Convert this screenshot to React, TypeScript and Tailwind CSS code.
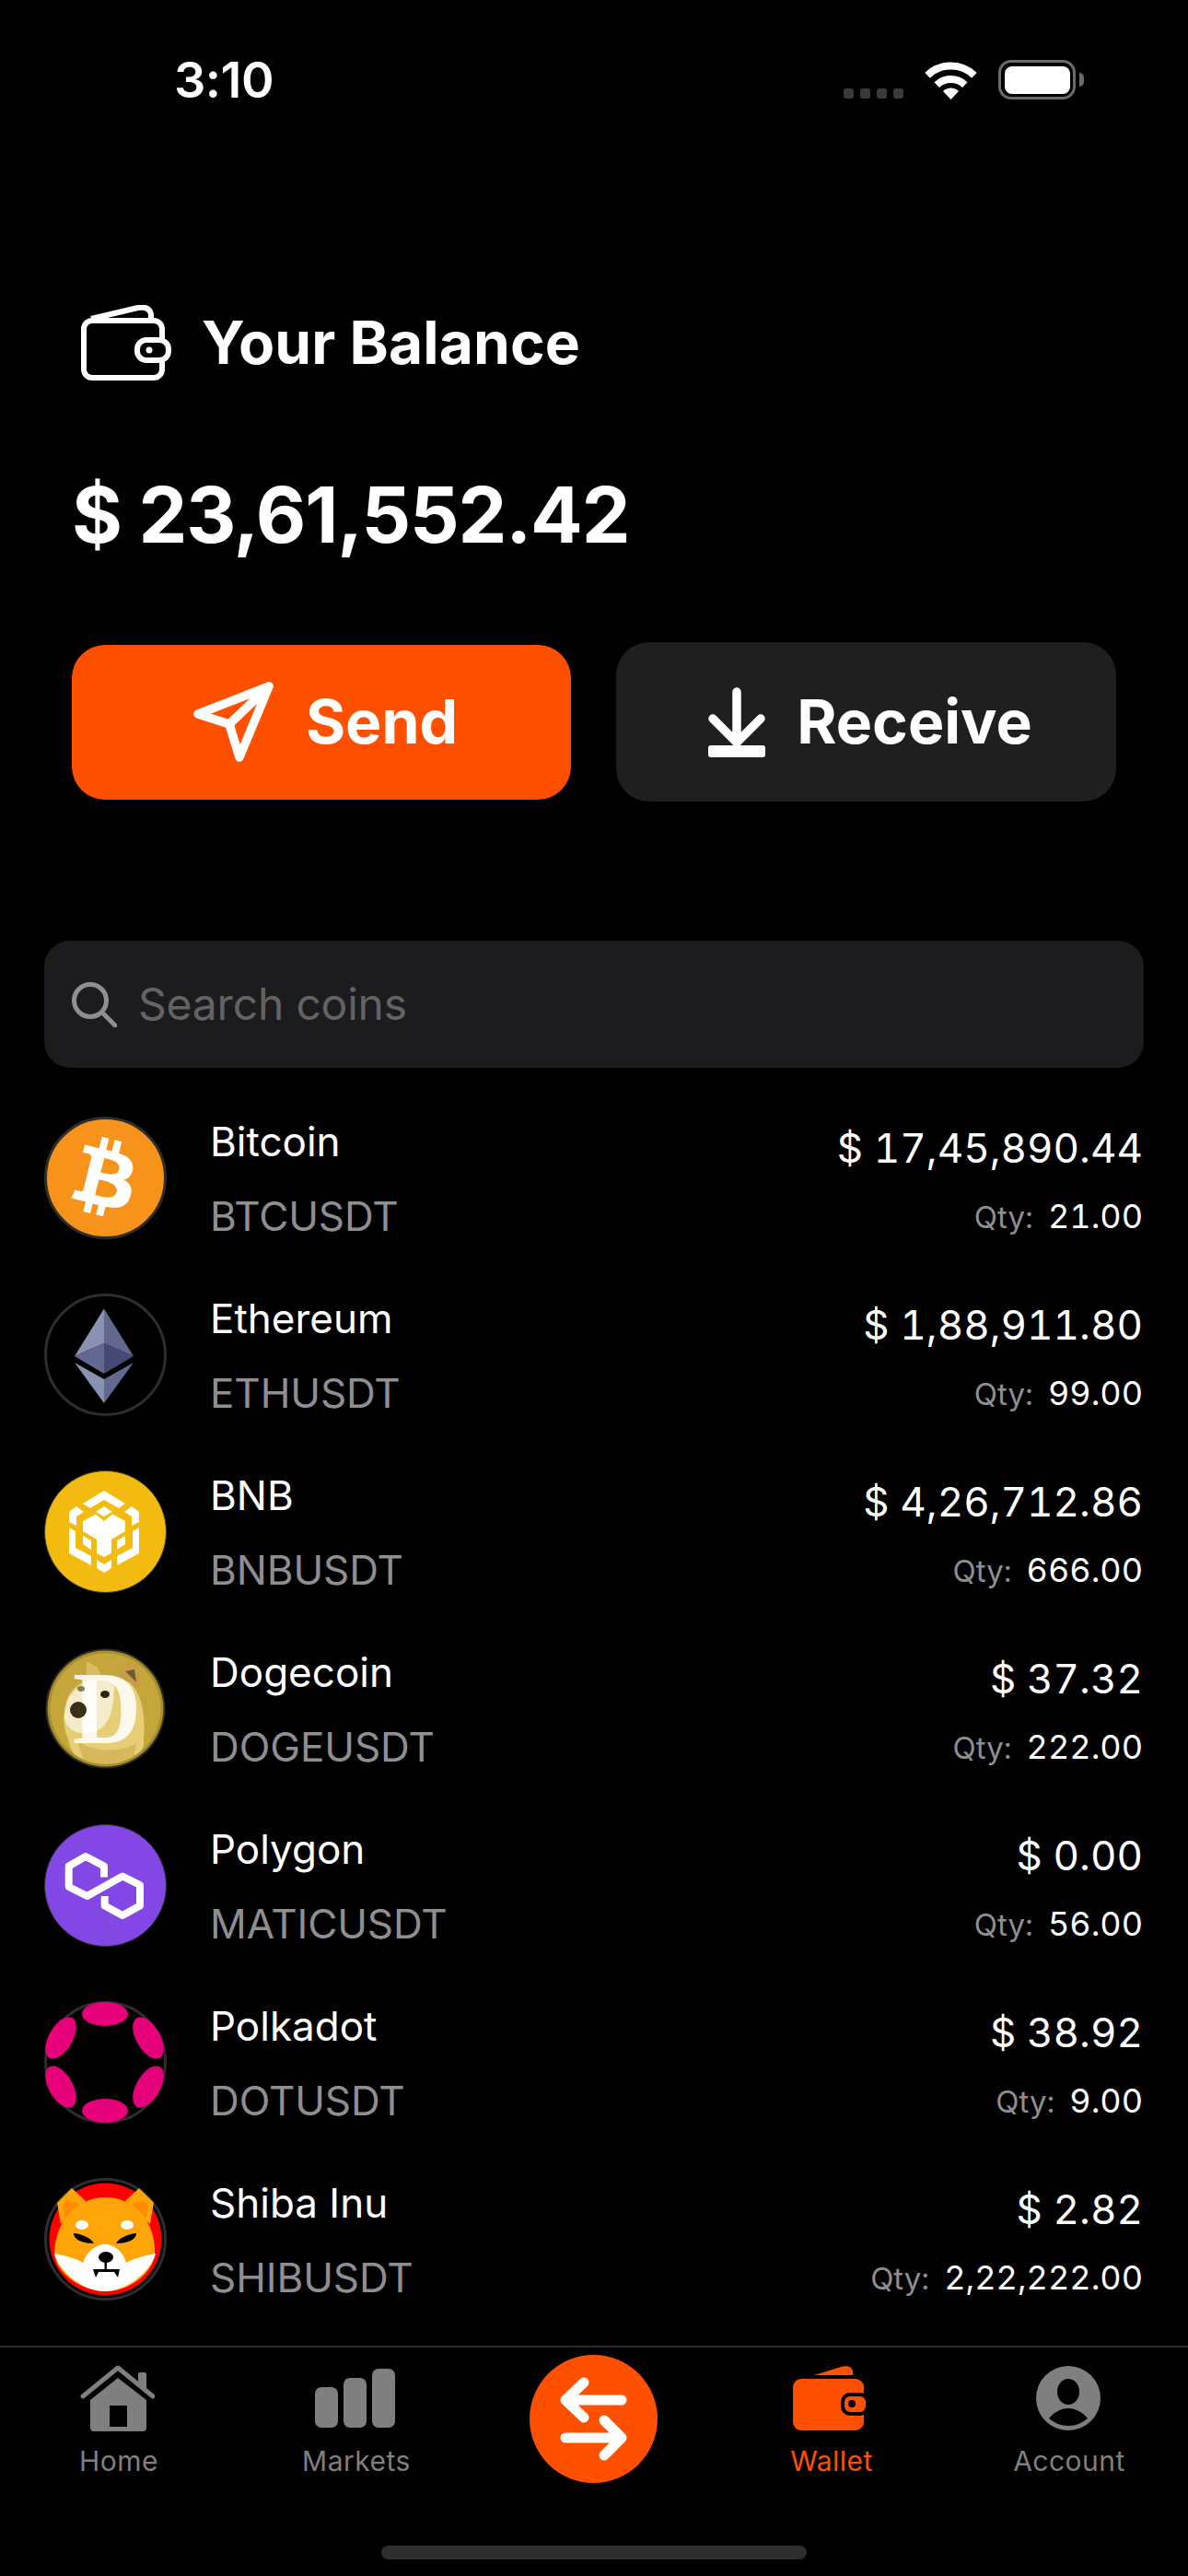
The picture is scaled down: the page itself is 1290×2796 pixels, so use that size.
import { FaBtc } from "react-icons/fa";
import type { ReactNode } from "react";

const coins = [
  { name: "Bitcoin", symbol: "BTCUSDT", price: "$ 17,45,890.44", qty: "21.00", logo: <BitcoinLogo /> },
  { name: "Ethereum", symbol: "ETHUSDT", price: "$ 1,88,911.80", qty: "99.00", logo: <EthLogo /> },
  { name: "BNB", symbol: "BNBUSDT", price: "$ 4,26,712.86", qty: "666.00", logo: <BnbLogo /> },
  { name: "Dogecoin", symbol: "DOGEUSDT", price: "$ 37.32", qty: "222.00", logo: <DogeLogo /> },
  { name: "Polygon", symbol: "MATICUSDT", price: "$ 0.00", qty: "56.00", logo: <PolygonLogo /> },
  { name: "Polkadot", symbol: "DOTUSDT", price: "$ 38.92", qty: "9.00", logo: <DotLogo /> },
  { name: "Shiba Inu", symbol: "SHIBUSDT", price: "$ 2.82", qty: "2,22,222.00", logo: <ShibLogo /> },
];

function BitcoinLogo() {
  return (
    <div className="flex h-[133px] w-[133px] items-center justify-center rounded-full border-[3px] border-[#2e2e2e] bg-[#f7931a]">
      <FaBtc className="h-[84px] w-[84px] rotate-[14deg] text-white" />
    </div>
  );
}

function EthLogo() {
  return (
    <svg viewBox="0 0 133 133" className="h-[133px] w-[133px]">
      <circle cx="66.5" cy="66.5" r="65" fill="#000" stroke="#2e2e2e" strokeWidth="3" />
      <polygon points="65,16.5 33,68 65,54" fill="#8a92b2" />
      <polygon points="65,16.5 97,68 65,54" fill="#62688f" />
      <polygon points="33,68 65,54 65,87" fill="#62688f" />
      <polygon points="97,68 65,54 65,87" fill="#454a75" />
      <polygon points="33,75 65,93 65,119" fill="#8a92b2" />
      <polygon points="97,75 65,93 65,119" fill="#62688f" />
    </svg>
  );
}

function BnbLogo() {
  return (
    <svg viewBox="0 0 133 133" className="h-[133px] w-[133px]">
      <circle cx="66.5" cy="66.5" r="66" fill="#f3ba0f" stroke="#3a3a2a" strokeWidth="1" />
      <g fill="#fff">
        <polygon points="65,22 88,36 81,41 65,32 50,41 42,36" />
        <polygon points="65,39 74,45 65,50 56,45" />
        <polygon points="27,45 35,39 43,45 35,50 35,60 27,56" />
        <polygon points="103,45 95,39 87,45 95,50 95,60 103,56" />
        <polygon points="56,47.6 65,55 74,47.6 88,55 88,66 73,75 73,90 65,94 57,90 57,75 42,66 42,55" />
        <polygon points="27,62 34,66 34,84 51,93 51,103 27,90" />
        <polygon points="103,62 96,66 96,84 79,93 79,103 103,90" />
        <polygon points="42,71 51,76 51,86 42,80" />
        <polygon points="88,71 79,76 79,86 88,80" />
        <polygon points="57,97 65,102 73,97 73,106 65,111 57,106" />
      </g>
    </svg>
  );
}

function DogeLogo() {
  return (
    <svg viewBox="0 0 133 133" className="h-[133px] w-[133px]">
      <defs>
        <clipPath id="dogeClip">
          <circle cx="66.5" cy="66.5" r="60" />
        </clipPath>
      </defs>
      <circle cx="66.5" cy="66.5" r="65" fill="#2e2e2e" />
      <circle cx="66.5" cy="66.5" r="63" fill="#a8902c" />
      <circle cx="66.5" cy="66.5" r="60" fill="#c4a63a" />
      <g clipPath="url(#dogeClip)">
        <polygon points="45,50 46,15 58,22 62,32 40,40" fill="#dcbc62" />
        <polygon points="78,30 92,16 102,18 104,46 90,40" fill="#c89f48" />
        <polygon points="88,26 98,24 100,38" fill="#6b5a34" />
        <path d="M24 60 C30 32 70 26 92 38 C108 50 110 80 108 100 C110 118 90 128 66 128 C46 128 30 122 26 100 C20 86 20 72 24 60Z" fill="#e7cd76" />
        <path d="M24 62 C30 40 60 30 76 40 C76 70 70 90 50 92 C36 96 22 88 22 74Z" fill="#f4ecca" />
        <path d="M36 102 C50 112 80 116 100 104 L96 126 L44 126Z" fill="#d8b85c" />
      </g>
      <text x="31" y="104" textLength="74" lengthAdjust="spacingAndGlyphs" fontFamily="Liberation Serif, serif" fontWeight="700" fontSize="112" fill="#fff" fillOpacity="0.86">
        D
      </text>
      <ellipse cx="37" cy="68" rx="9" ry="9" fill="#3b2f1c" />
      <ellipse cx="66" cy="51" rx="5" ry="4" fill="#2e2412" />
      <ellipse cx="40" cy="45" rx="4" ry="3" fill="#8a7d55" />
    </svg>
  );
}

function PolygonLogo() {
  return (
    <svg viewBox="0 0 133 133" className="h-[133px] w-[133px]">
      <circle cx="66.5" cy="66.5" r="66" fill="#8247e5" stroke="#2e2e2e" strokeWidth="1" />
      <path
        d="M65 57.6V45.5L45 35 26.7 45.5V68L46.7 78 85 56.5 104 66V88.6L85 99 65.7 88.6V78"
        fill="none"
        stroke="#fff"
        strokeWidth="8"
        strokeLinejoin="round"
      />
    </svg>
  );
}

function DotLogo() {
  return (
    <svg viewBox="0 0 133 133" className="h-[133px] w-[133px]">
      <circle cx="66.5" cy="66.5" r="65" fill="#000" stroke="#2e2e2e" strokeWidth="3" />
      <g fill="#e6007a">
        <ellipse cx="66" cy="14" rx="25" ry="13" />
        <ellipse cx="66" cy="119" rx="25" ry="13" />
        <ellipse cx="18" cy="40" rx="25" ry="13" transform="rotate(-60 18 40)" />
        <ellipse cx="113" cy="40" rx="25" ry="13" transform="rotate(60 113 40)" />
        <ellipse cx="18" cy="93" rx="25" ry="13" transform="rotate(60 18 93)" />
        <ellipse cx="113" cy="93" rx="25" ry="13" transform="rotate(-60 113 93)" />
      </g>
    </svg>
  );
}

function ShibLogo() {
  return (
    <svg viewBox="0 0 133 133" className="h-[133px] w-[133px]">
      <defs>
        <clipPath id="shibClip">
          <circle cx="66.5" cy="66.5" r="61" />
        </clipPath>
      </defs>
      <circle cx="66.5" cy="66.5" r="65" fill="#000" stroke="#2e2e2e" strokeWidth="3" />
      <circle cx="66.5" cy="66.5" r="61" fill="#f00" />
      <polygon points="30,11 14,27 18,50 45,25" fill="#ffa409" />
      <polygon points="103,11 119,27 115,50 88,25" fill="#ffa409" />
      <polygon points="24,24 20,30 23,46 38,28" fill="#ff8c00" />
      <polygon points="109,24 113,30 110,46 95,28" fill="#ff8c00" />
      <g clipPath="url(#shibClip)">
        <path d="M11 82 C12 48 34 21 66.5 21 C99 21 121 48 120 82 C118 104 92 123 66.5 123 C41 123 13 104 11 82Z" fill="#ffa409" />
        <path d="M11 82 C22 84 34 87 42 92 C46 80 56 72 66 72 C76 72 86 80 89 92 C98 87 110 84 121 82 C118 98 92 123 66 123 C42 123 16 102 11 82Z" fill="#fff" />
      </g>
      <ellipse cx="41" cy="51" rx="7" ry="5" fill="#fff" />
      <ellipse cx="90" cy="51" rx="7" ry="5" fill="#fff" />
      <path d="M32 60 C38 60 50 64 54 71 C44 71 32 68 32 60Z" fill="#000" />
      <path d="M100 60 C94 60 82 64 78 71 C88 71 100 68 100 60Z" fill="#000" />
      <ellipse cx="67" cy="86" rx="8" ry="6" fill="#000" />
      <rect x="65.5" y="90" width="2.5" height="9" fill="#000" />
      <path d="M53 99 H82 L80 108 L76 102 H59 L56 108Z" fill="#000" />
    </svg>
  );
}

function WalletOutline() {
  return (
    <svg viewBox="0 0 98 82" className="h-[82px] w-[98px]" fill="none" stroke="#fff" strokeWidth="6" strokeLinejoin="round">
      <path d="M11 15 L62 3 Q74 1 76 10 V17" />
      <rect x="3" y="17" width="85" height="62" rx="9" />
      <rect x="61" y="38" width="34" height="22" rx="10" fill="#000" />
      <circle cx="74" cy="49" r="3.5" fill="#fff" stroke="none" />
    </svg>
  );
}

function SendIcon() {
  return (
    <svg viewBox="0 0 87 87" className="h-[87px] w-[87px]" fill="none" stroke="#fff" strokeWidth="9.5" strokeLinejoin="round" strokeLinecap="round">
      <path d="M82 5 L5 35 L39 46 L50 82Z" />
      <path d="M39 46 L82 5" />
    </svg>
  );
}

function ReceiveIcon() {
  return (
    <svg viewBox="0 0 62 76" className="h-[76px] w-[62px]" fill="none" stroke="#fff" strokeWidth="9.5" strokeLinecap="round" strokeLinejoin="round">
      <path d="M31 5 V60" />
      <path d="M5 34 L31 60 L57 34" />
      <rect x="0" y="63" width="62" height="13" rx="3" fill="#fff" stroke="none" />
    </svg>
  );
}

function SearchIcon() {
  return (
    <svg viewBox="0 0 49 49" className="h-[49px] w-[49px]" fill="none" stroke="#8e8e93" strokeWidth="5" strokeLinecap="round">
      <circle cx="20" cy="20" r="17.5" />
      <path d="M33 33 L47 47" />
    </svg>
  );
}

function HomeIcon() {
  return (
    <svg viewBox="0 0 81 72" className="h-[72px] w-[81px]">
      <path d="M3 34 L41 3 L79 34" fill="none" stroke="#7f7f7f" strokeWidth="5" strokeLinecap="round" strokeLinejoin="round" />
      <path d="M63 16 V10 Q63 8 65 8 H70 Q72 8 72 10 V27 L63 20Z" fill="#7f7f7f" />
      <path
        fillRule="evenodd"
        d="M41 14 L72 38 V68 Q72 72 68 72 H15 Q11 72 11 68 V38Z M32 44 V67 H51 V44Z"
        fill="#7f7f7f"
      />
    </svg>
  );
}

function MarketsIcon() {
  return (
    <svg viewBox="0 0 87 64" className="h-[64px] w-[87px]" fill="#7f7f7f">
      <rect x="0" y="20" width="25" height="44" rx="7" />
      <rect x="31" y="10" width="25" height="54" rx="7" />
      <rect x="62" y="0" width="25" height="64" rx="7" />
    </svg>
  );
}

function WalletIcon() {
  return (
    <svg viewBox="0 0 82 70" className="h-[70px] w-[82px]">
      <path d="M23 10 L54 0.5 Q64 -1 65 6 V10Z" fill="#ff5000" />
      <rect x="0" y="14" width="77" height="56" rx="9" fill="#ff5000" />
      <rect x="54" y="31" width="27" height="21" rx="8" fill="#ff5000" stroke="#000" strokeWidth="4" />
      <circle cx="64" cy="41" r="4" fill="#000" />
    </svg>
  );
}

function AccountIcon() {
  return (
    <svg viewBox="0 0 70 70" className="h-[70px] w-[70px]">
      <circle cx="35" cy="35" r="35" fill="#7f7f7f" />
      <ellipse cx="35" cy="28" rx="12" ry="14" fill="#000" />
      <path d="M14 57 C20 50 27 46 35 46 C43 46 50 50 56 57 C50 62 43 65 35 65 C27 65 20 62 14 57Z" fill="#000" />
    </svg>
  );
}

function SwapIcon() {
  return (
    <svg viewBox="0 0 139 139" className="h-[139px] w-[139px]" fill="none" stroke="#fff" strokeWidth="11" strokeLinecap="round" strokeLinejoin="round">
      <path d="M100 49 H39 M59 30 L39 49 L59 68" />
      <path d="M39 90 H100 M81 71 L100 90 L81 109" />
    </svg>
  );
}

function WifiIcon() {
  return (
    <svg viewBox="0 0 57 41" className="h-[41px] w-[57px]" fill="none" stroke="#fff" strokeWidth="8">
      <path d="M3.1 14.8 A36.5 36.5 0 0 1 53.9 14.8" />
      <path d="M13.2 25.2 A22 22 0 0 1 43.8 25.2" />
      <path d="M28.5 41 L20 32 A12 12 0 0 1 37 32Z" fill="#fff" stroke="none" />
    </svg>
  );
}

function TabItem({ icon, label, active }: { icon: ReactNode; label: string; active?: boolean }) {
  return (
    <div className="flex flex-col items-center">
      <div className="mr-[3px] flex h-[72px] items-center justify-center">{icon}</div>
      <span className={`mt-[14px] text-[30px] leading-[36px] tracking-[0.5px] ${active ? "text-[#ff5000]" : "text-[#7f7f7f]"}`}>{label}</span>
    </div>
  );
}

export default function App() {
  return (
    <div className="flex h-[2796px] w-[1290px] flex-col overflow-hidden bg-black font-['Inter',sans-serif] text-white">
      {/* status bar */}
      <div className="flex h-[108px] items-end justify-between pl-[189px] pr-[113px]">
        <span className="mb-[-9px] text-[54px] font-semibold leading-[60px] tracking-[-0.5px]">3:10</span>
        <div className="flex items-end">
          <div className="mb-[1px] flex gap-[7px]">
            <span className="h-[11px] w-[11px] rounded-[3px] bg-[#3a3a3a]" />
            <span className="h-[11px] w-[11px] rounded-[3px] bg-[#3a3a3a]" />
            <span className="h-[11px] w-[11px] rounded-[3px] bg-[#3a3a3a]" />
            <span className="h-[11px] w-[11px] rounded-[3px] bg-[#3a3a3a]" />
          </div>
          <div className="ml-[23px]">
            <WifiIcon />
          </div>
          <div className="ml-[23px] flex items-center">
            <div className="h-[43px] w-[84px] rounded-[14px] border-[3.5px] border-[#6b6b6b] p-[3.5px]">
              <div className="h-full w-full rounded-[8px] bg-white" />
            </div>
            <span className="ml-[4px] h-[15px] w-[5px] rounded-r-full bg-[#6b6b6b]" />
          </div>
        </div>
      </div>

      {/* balance */}
      <div className="mt-[223px] flex h-[82px] items-center pl-[88px]">
        <WalletOutline />
        <span className="ml-[33px] text-[64px] font-bold leading-[82px] tracking-[0.1px]">Your Balance</span>
      </div>
      <div className="mt-[96px] pl-[78px] text-[84px] font-bold leading-[100px] tracking-[-1.2px]">$ 23,61,552.42</div>

      {/* actions */}
      <div className="mt-[88px] flex h-[173px] items-center gap-[49px] pl-[78px]">
        <button className="flex h-[168px] w-[542px] items-center justify-center gap-[35px] rounded-[36px] bg-[#ff5000] pl-[9px]">
          <SendIcon />
          <span className="text-[66px] font-bold">Send</span>
        </button>
        <button className="flex h-[173px] w-[543px] items-center justify-center gap-[34px] rounded-[36px] bg-[#1f1f1f] pl-[9px]">
          <ReceiveIcon />
          <span className="text-[66px] font-bold">Receive</span>
        </button>
      </div>

      {/* search */}
      <div className="mx-[48px] mt-[151px] flex h-[138px] items-center gap-[23px] rounded-[28px] bg-[#1c1c1e] pl-[30px]">
        <SearchIcon />
        <span className="text-[48px] leading-[62px] tracking-[-0.2px] text-[#636366]">Search coins</span>
      </div>

      {/* coins */}
      <div className="mt-[24px] flex flex-col pl-[48px] pr-[49px]">
        {coins.map((coin) => (
          <div key={coin.symbol} className="flex h-[192px] items-center">
            <div className="mb-[2px] shrink-0">{coin.logo}</div>
            <div className="ml-[47px] flex flex-col gap-[27px]">
              <span className="mt-[1px] text-[44px] leading-[54px]">{coin.name}</span>
              <span className="text-[44px] leading-[54px] tracking-[-0.1px] text-[#8e8e93]">{coin.symbol}</span>
            </div>
            <div className="ml-auto flex flex-col items-end gap-[20px] pt-[8px] tabular-nums">
              <span className="text-[44px] leading-[54px]">{coin.price}</span>
              <span className="flex items-baseline gap-[16px] leading-[54px]">
                <span className="text-[33px] text-[#8e8e93]">Qty:</span>
                <span className="text-[36px]">{coin.qty}</span>
              </span>
            </div>
          </div>
        ))}
      </div>

      {/* tab bar */}
      <div className="mt-[19px] grid grid-cols-5 border-t-2 border-[#2a2a2a] pt-[19px]">
        <TabItem icon={<HomeIcon />} label="Home" />
        <TabItem icon={<MarketsIcon />} label="Markets" />
        <div className="mt-[-11px] flex justify-center">
          <div className="mr-[2px] h-[139px] w-[139px] rounded-full bg-[#ff5000]">
            <SwapIcon />
          </div>
        </div>
        <TabItem icon={<WalletIcon />} label="Wallet" active />
        <TabItem icon={<AccountIcon />} label="Account" />
      </div>

      <div className="mx-auto mt-[68px] h-[15px] w-[462px] rounded-full bg-[#2e2e2e]" />
    </div>
  );
}
